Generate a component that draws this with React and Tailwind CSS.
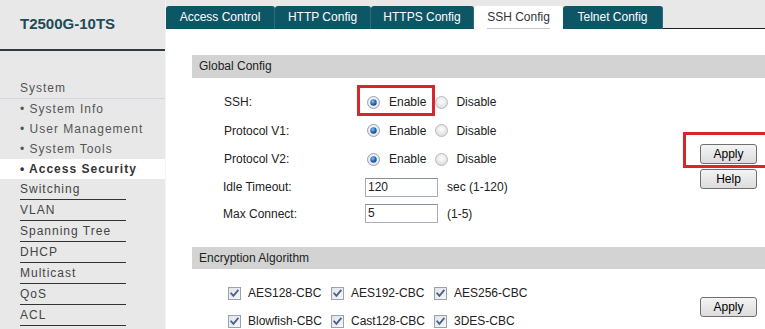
import React from "react";

function Radio({ checked }) {
  return (
    <svg width="13" height="13" viewBox="0 0 13 13" className="shrink-0">
      <defs>
        <radialGradient id={checked ? "rgc" : "rgu"} cx="50%" cy="40%" r="60%">
          <stop offset="0%" stopColor="#ffffff" />
          <stop offset="100%" stopColor={checked ? "#dfe4ea" : "#d9dadb"} />
        </radialGradient>
        <radialGradient id="rdot" cx="40%" cy="35%" r="70%">
          <stop offset="0%" stopColor="#8fc3ef" />
          <stop offset="55%" stopColor="#2b6bb5" />
          <stop offset="100%" stopColor="#1c3f73" />
        </radialGradient>
      </defs>
      <circle cx="6.5" cy="6.5" r="6" fill={`url(#${checked ? "rgc" : "rgu"})`} stroke={checked ? "#97a3b1" : "#b8bbbe"} strokeWidth="1" />
      {checked && <circle cx="6.5" cy="6.5" r="3.2" fill="url(#rdot)" />}
    </svg>
  );
}

function Check() {
  return (
    <svg width="13" height="13" viewBox="0 0 13 13" className="shrink-0">
      <defs>
        <linearGradient id="cbg" x1="0" y1="0" x2="1" y2="1">
          <stop offset="0%" stopColor="#dfe4ea" />
          <stop offset="100%" stopColor="#f7f8f9" />
        </linearGradient>
      </defs>
      <rect x="0.5" y="0.5" width="12" height="12" fill="url(#cbg)" stroke="#9aa3ad" />
      <path d="M3.2 6.4 L5.4 8.8 L9.8 3.6" fill="none" stroke="#4c5f86" strokeWidth="1.8" strokeLinecap="square" />
    </svg>
  );
}

function Btn({ children }) {
  return (
    <div className="w-[57px] h-[20px] rounded-[3px] border border-[#707070] bg-gradient-to-b from-[#f4f4f4] to-[#dcdcdc] text-[12px] leading-[18px] text-black text-center">
      {children}
    </div>
  );
}

const tabs = [
  { label: "Access Control", w: "w-[109px]" },
  { label: "HTTP Config", w: "w-[96px]" },
  { label: "HTTPS Config", w: "w-[103px]" },
  { label: "SSH Config", w: "w-[89px]", active: true },
  { label: "Telnet Config", w: "w-[100px]" },
];

const subItems = ["System Info", "User Management", "System Tools"];
const mainItems = ["Switching", "VLAN", "Spanning Tree", "DHCP", "Multicast", "QoS", "ACL"];

export default function App() {
  return (
    <div className="relative flex w-[765px] h-[329px] overflow-hidden bg-white font-['Liberation_Sans',Arial,sans-serif]">
      {/* Sidebar */}
      <aside className="w-[166px] shrink-0 bg-[#e8e8e8] border-r border-[#f4f4f4]">
        <div className="h-[49px] flex items-center pl-[20px]">
          <span className="text-[15px] font-bold text-[#1b4c58]">T2500G-10TS</span>
        </div>
        <div className="h-[2px] bg-[#2e3a3e]" />
        <div className="pt-[27px]">
          <div className="h-[21px] leading-[21px] pl-[20px] text-[12px] tracking-[1px] text-[#555] border-b border-[#d0d6dc]">
            System
          </div>
          {subItems.map((s) => (
            <div key={s} className="h-[20px] leading-[20px] pl-[20px] text-[12px] tracking-[1px] text-[#555]">
              • {s}
            </div>
          ))}
          <div className="h-[20px] leading-[20px] pl-[20px] text-[12px] tracking-[1px] font-bold text-[#333] bg-white">
            • Access Security
          </div>
          {mainItems.map((s) => (
            <div key={s} className="pl-[20px]">
              <div className="w-[106px] h-[21px] leading-[20px] text-[12px] tracking-[1px] text-[#444] border-b border-[#333]">
                {s}
              </div>
            </div>
          ))}
        </div>
      </aside>

      {/* Main */}
      <main className="flex-1 flex flex-col">
        <div className="h-[29px] shrink-0 bg-[#e8e8e8] flex items-end">
          {tabs.map((t) =>
            t.active ? (
              <div key={t.label} className={`${t.w} h-[23px] bg-white rounded-t-[3px] flex justify-center`}>
                <span className="text-[12px] leading-[21px] text-[#333] border-b border-[#c8c8c8] h-[23px] pt-[1px]">{t.label}</span>
              </div>
            ) : (
              <div
                key={t.label}
                className={`${t.w} h-[23px] bg-[#0d5666] rounded-t-[3px] border-r border-[#2f6c79] text-[12px] leading-[23px] text-white text-center`}
              >
                {t.label}
              </div>
            )
          )}
          <div className="flex-1 h-[2px] border-b border-[#222]" />
        </div>

        <div className="shrink-0 pl-[26px] pt-[26px]">
          <div className="h-[23px] bg-[#d3d3d3] pl-[7px] text-[12px] leading-[23px] text-[#222]">Global Config</div>

          <div className="flex">
            <div className="pl-[32px] pt-[10px] text-[12px] text-[#222]">
              {[
                { label: "SSH:", h: "h-[28px]" },
                { label: "Protocol V1:", h: "h-[29px]" },
                { label: "Protocol V2:", h: "h-[28px]" },
              ].map((r) => (
                <div key={r.label} className={`${r.h} flex items-center`}>
                  <div className="w-[141px]">{r.label}</div>
                  <div className="ml-[2px]"><Radio checked /></div>
                  <span className="ml-[9px]">Enable</span>
                  <div className="ml-[9px]"><Radio /></div>
                  <span className="ml-[8px]">Disable</span>
                </div>
              ))}
              <div className="h-[28px] flex items-center -ml-[1px]">
                <div className="w-[142px]">Idle Timeout:</div>
                <div className="w-[73px] h-[19px] border border-[#a9aeb5] border-t-[#8a9099] px-[2px] leading-[17px]">120</div>
                <span className="ml-[9px]">sec (1-120)</span>
              </div>
              <div className="h-[25px] flex items-center -ml-[1px]">
                <div className="w-[142px]">Max Connect:</div>
                <div className="w-[73px] h-[19px] border border-[#a9aeb5] border-t-[#8a9099] px-[2px] leading-[17px]">5</div>
                <span className="ml-[9px]">(1-5)</span>
              </div>
            </div>
            <div className="ml-auto mr-[8px] pt-[66px] flex flex-col gap-[5px]">
              <Btn>Apply</Btn>
              <Btn>Help</Btn>
            </div>
          </div>

          <div className="mt-[21px] h-[22px] bg-[#d3d3d3] pl-[7px] text-[12px] leading-[22px] text-[#222]">Encryption Algorithm</div>

          <div className="flex">
            <div className="pl-[36px] pt-[10px] text-[12px] text-[#222]">
              {[
                ["AES128-CBC", "AES192-CBC", "AES256-CBC"],
                ["Blowfish-CBC", "Cast128-CBC", "3DES-CBC"],
              ].map((row, i) => (
                <div key={i} className="h-[28px] flex items-center">
                  {row.map((c, j) => (
                    <div key={c} className={`${j < 2 ? "w-[103px]" : ""} flex items-center`}>
                      <Check />
                      <span className="ml-[7px]">{c}</span>
                    </div>
                  ))}
                </div>
              ))}
            </div>
            <div className="ml-auto mr-[8px] pt-[28px]">
              <Btn>Apply</Btn>
            </div>
          </div>
        </div>
      </main>

      {/* Annotation boxes */}
      <div className="absolute left-[357px] top-[85px] w-[78px] h-[31px] border-[3px] border-[#d7262e] pointer-events-none" />
      <div className="absolute left-[683px] top-[132px] w-[95px] h-[36px] border-[3px] border-[#d7262e] pointer-events-none" />
    </div>
  );
}
